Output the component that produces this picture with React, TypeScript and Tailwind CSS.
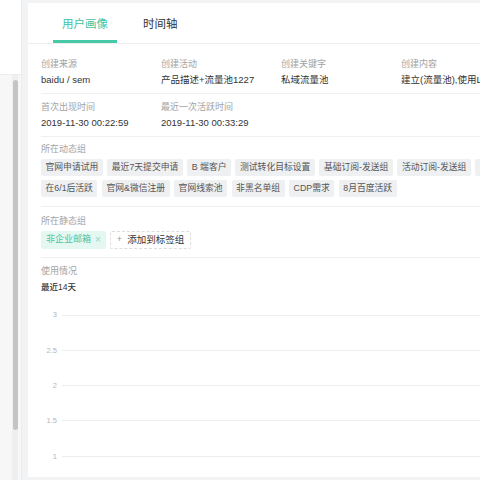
const FONT = { fontFamily: '"Liberation Sans", "Noto Sans CJK SC", sans-serif' };

const infoRows = [
  [
    { label: "创建来源", value: "baidu / sem" },
    { label: "创建活动", value: "产品描述+流量池1227" },
    { label: "创建关键字", value: "私域流量池" },
    { label: "创建内容", value: "建立(流量池),使用Link" },
  ],
  [
    { label: "首次出现时间", value: "2019-11-30 00:22:59" },
    { label: "最近一次活跃时间", value: "2019-11-30 00:33:29" },
  ],
];

const dynamicGroups = [
  "官网申请试用",
  "最近7天提交申请",
  "B 端客户",
  "测试转化目标设置",
  "基础订阅-发送组",
  "活动订阅-发送组",
  "线索组",
  "在6/1后活跃",
  "官网&微信注册",
  "官网线索池",
  "非黑名单组",
  "CDP需求",
  "8月百度活跃",
];

const yTicks = ["3", "2.5", "2", "1.5", "1"];

function Label({ children }: { children: React.ReactNode }) {
  return <div className="text-[9px] leading-[12px] text-[#a3a3a3] whitespace-nowrap">{children}</div>;
}

export default function App() {
  return (
    <div className="w-[480px] h-[480px] overflow-hidden bg-[#f2f3f5] flex" style={FONT}>
      {/* left list column with scrollbar */}
      <div className="w-[22px] shrink-0 flex flex-col border-r border-[#ececec]">
        <div className="h-[75px] bg-white border-b border-[#ececec]" />
        <div className="flex-1 bg-[#f7f7f7] flex justify-end pr-[3px]">
          <div className="w-[6px] bg-[#efefef] flex flex-col">
            <div className="mt-[5px] h-[350px] w-[5px] mx-auto rounded-full bg-[#c4c4c4]" />
          </div>
        </div>
      </div>

      {/* main panel */}
      <div className="ml-[6px] mt-[3px] h-[474px] w-[560px] shrink-0 bg-white flex flex-col">
        {/* tabs */}
        <div className="h-[41px] border-b border-[#eeeeee] flex items-end pl-[25px] gap-[17px]">
          <div className="px-[9px] h-[40px] flex items-center text-[11.5px] text-[#3fc4a2] border-b-[3px] border-[#45c9a7] pt-[7px]">
            用户画像
          </div>
          <div className="px-[9px] h-[40px] flex items-center text-[11.5px] text-[#333] border-b-[3px] border-transparent pt-[7px]">
            时间轴
          </div>
        </div>

        <div className="pl-[13px] pt-[7px]">
          {infoRows.map((row, i) => (
            <div key={i} className="flex border-b border-[#f0f0f0] pt-[7px] pb-[6px]">
              {row.map((c) => (
                <div key={c.label} className="w-[120px] shrink-0">
                  <Label>{c.label}</Label>
                  <div className="mt-[3px] text-[9.5px] leading-[14px] text-[#333] whitespace-nowrap">{c.value}</div>
                </div>
              ))}
            </div>
          ))}

          {/* dynamic groups */}
          <div className="border-b border-[#f0f0f0] pt-[6px] pb-[9px]">
            <Label>所在动态组</Label>
            <div className="mt-[4px] flex flex-wrap gap-x-[4.5px] gap-y-[4px] w-[480px]">
              {dynamicGroups.map((g) => (
                <span
                  key={g}
                  className="h-[17px] px-[4.5px] flex items-center rounded-[2px] bg-[#eff0f2] text-[8.8px] text-[#555] whitespace-nowrap"
                >
                  {g}
                </span>
              ))}
            </div>
          </div>

          {/* static groups */}
          <div className="border-b border-[#f0f0f0] pt-[8px] pb-[8px]">
            <Label>所在静态组</Label>
            <div className="mt-[4px] flex gap-[4px]">
              <span className="h-[18px] px-[5px] flex items-center gap-[4px] rounded-[2px] bg-[#e4f7f1] text-[9px] text-[#4cc3a4]">
                非企业邮箱
                <span className="text-[10px] text-[#8fd9c4] leading-none">×</span>
              </span>
              <span className="h-[18px] px-[6px] flex items-center gap-[5px] rounded-[2px] border border-dashed border-[#dcdcdc] text-[9.5px] text-[#333]">
                <span className="text-[#999] text-[9px]">+</span>
                添加到标签组
              </span>
            </div>
          </div>

          {/* usage */}
          <div className="pt-[7px]">
            <Label>使用情况</Label>
            <div className="mt-[4px] text-[8.5px] leading-[12px] text-[#333] font-medium">最近14天</div>
            <div className="mt-[16px] flex flex-col gap-[23.3px]">
              {yTicks.map((t) => (
                <div key={t} className="h-[12px] flex items-center">
                  <span className="w-[16px] text-right text-[7.5px] text-[#b5b5b5]">{t}</span>
                  <div className="ml-[5px] flex-1 h-px bg-[#ededed]" />
                </div>
              ))}
            </div>
          </div>
        </div>
      </div>
    </div>
  );
}
